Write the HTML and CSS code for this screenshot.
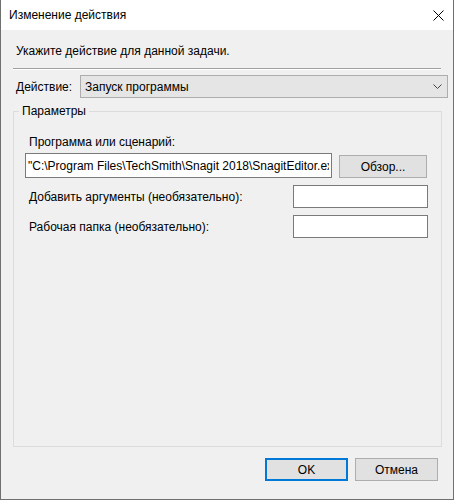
FILE: index.html
```html
<!DOCTYPE html>
<html>
<head>
  <title>Изменение действия</title>
  <link rel="stylesheet" href="styles.css">
</head>
<body>
  <div class="window">
    <div class="titlebar">
      <span class="title">Изменение действия</span>
      <span class="close">
        <svg width="11" height="11" viewBox="0 0 11 11">
          <path d="M0.5 0.5 L10.5 10.5 M10.5 0.5 L0.5 10.5" stroke="#000" stroke-width="1" fill="none"/>
        </svg>
      </span>
    </div>

    <div class="content">
      <p class="hint">Укажите действие для данной задачи.</p>
      <div class="separator"></div>

      <div class="action-row">
        <label for="action">Действие:</label>
        <div class="select" id="action">
          <span>Запуск программы</span>
          <svg width="9" height="5" viewBox="0 0 9 5">
            <path d="M0.5 0.5 L4.5 4.5 L8.5 0.5" stroke="#444" stroke-width="1" fill="none"/>
          </svg>
        </div>
      </div>

      <fieldset class="group">
        <legend>Параметры</legend>
        <div class="group-body">
          <label for="program" class="field-label">Программа или сценарий:</label>
          <div class="program-row">
            <input type="text" id="program" class="text-input wide" value="&quot;C:\Program Files\TechSmith\Snagit 2018\SnagitEditor.exe&quot;">
            <button class="btn browse">Обзор...</button>
          </div>
          <div class="option-row">
            <label for="args">Добавить аргументы (необязательно):</label>
            <input type="text" id="args" class="text-input short">
          </div>
          <div class="option-row">
            <label for="folder">Рабочая папка (необязательно):</label>
            <input type="text" id="folder" class="text-input short">
          </div>
        </div>
      </fieldset>

      <div class="footer">
        <button class="btn default">OK</button>
        <button class="btn">Отмена</button>
      </div>
    </div>
  </div>
</body>
</html>
```

FILE: styles.css
```css
* {
  box-sizing: border-box;
}

body {
  margin: 0;
  font-family: "Liberation Sans", Arial, sans-serif;
  font-size: 12px;
  color: #000000;
  background-color: #f0f0f0;
}

.window {
  width: 454px;
  height: 500px;
  border: 1px solid #707070;
  border-top: none;
  background-color: #f0f0f0;
  display: flex;
  flex-direction: column;
}

.titlebar {
  height: 30px;
  background-color: #ffffff;
  display: flex;
  align-items: center;
  justify-content: space-between;
  padding: 0 9px 0 8px;
}

.close {
  display: flex;
  width: 11px;
  height: 11px;
}

.content {
  flex: 1;
  display: flex;
  flex-direction: column;
}

.hint {
  margin: 13px 0 0 15px;
  line-height: 16px;
}

.separator {
  margin: 9px 12px 0 12px;
  border-top: 1px solid #a0a0a0;
  border-bottom: 1px solid #ffffff;
}

.action-row {
  display: flex;
  align-items: center;
  margin: 5px 5px 0 15px;
}

.action-row label {
  width: 64px;
}

.select {
  flex: 1;
  height: 23px;
  display: flex;
  align-items: center;
  justify-content: space-between;
  padding: 0 5px 0 4px;
  background-color: #e5e5e5;
  border: 1px solid #adadad;
}

.group {
  margin: 5px 11px 0 12px;
  padding: 0;
  height: 344px;
  border: 1px solid #dcdcdc;
}

.group legend {
  margin-left: 5px;
  padding: 0 3px;
  line-height: 16px;
}

.group-body {
  padding: 15px 13px 0 11px;
}

.field-label {
  display: block;
  margin-left: 4px;
  line-height: 16px;
}

.program-row {
  display: flex;
  align-items: flex-start;
  margin-top: 3px;
}

.text-input {
  font: inherit;
  border: 1px solid #7a7a7a;
  background-color: #ffffff;
  padding: 0 2px;
  outline: none;
}

.text-input.wide {
  width: 307px;
  height: 25px;
}

.text-input.short {
  width: 135px;
  height: 23px;
}

.btn {
  font: inherit;
  color: #000000;
  width: 83px;
  height: 23px;
  background-color: #e1e1e1;
  border: 1px solid #adadad;
  padding: 0;
}

.browse {
  width: 88px;
  margin: 2px 0 0 7px;
}

.option-row {
  display: flex;
  align-items: center;
  justify-content: space-between;
  margin-top: 7px;
  padding-left: 4px;
}

.footer {
  display: flex;
  justify-content: flex-end;
  gap: 7px;
  margin-top: 11px;
  padding-right: 15px;
}

.btn.default {
  border: 2px solid #0078d7;
}
```
